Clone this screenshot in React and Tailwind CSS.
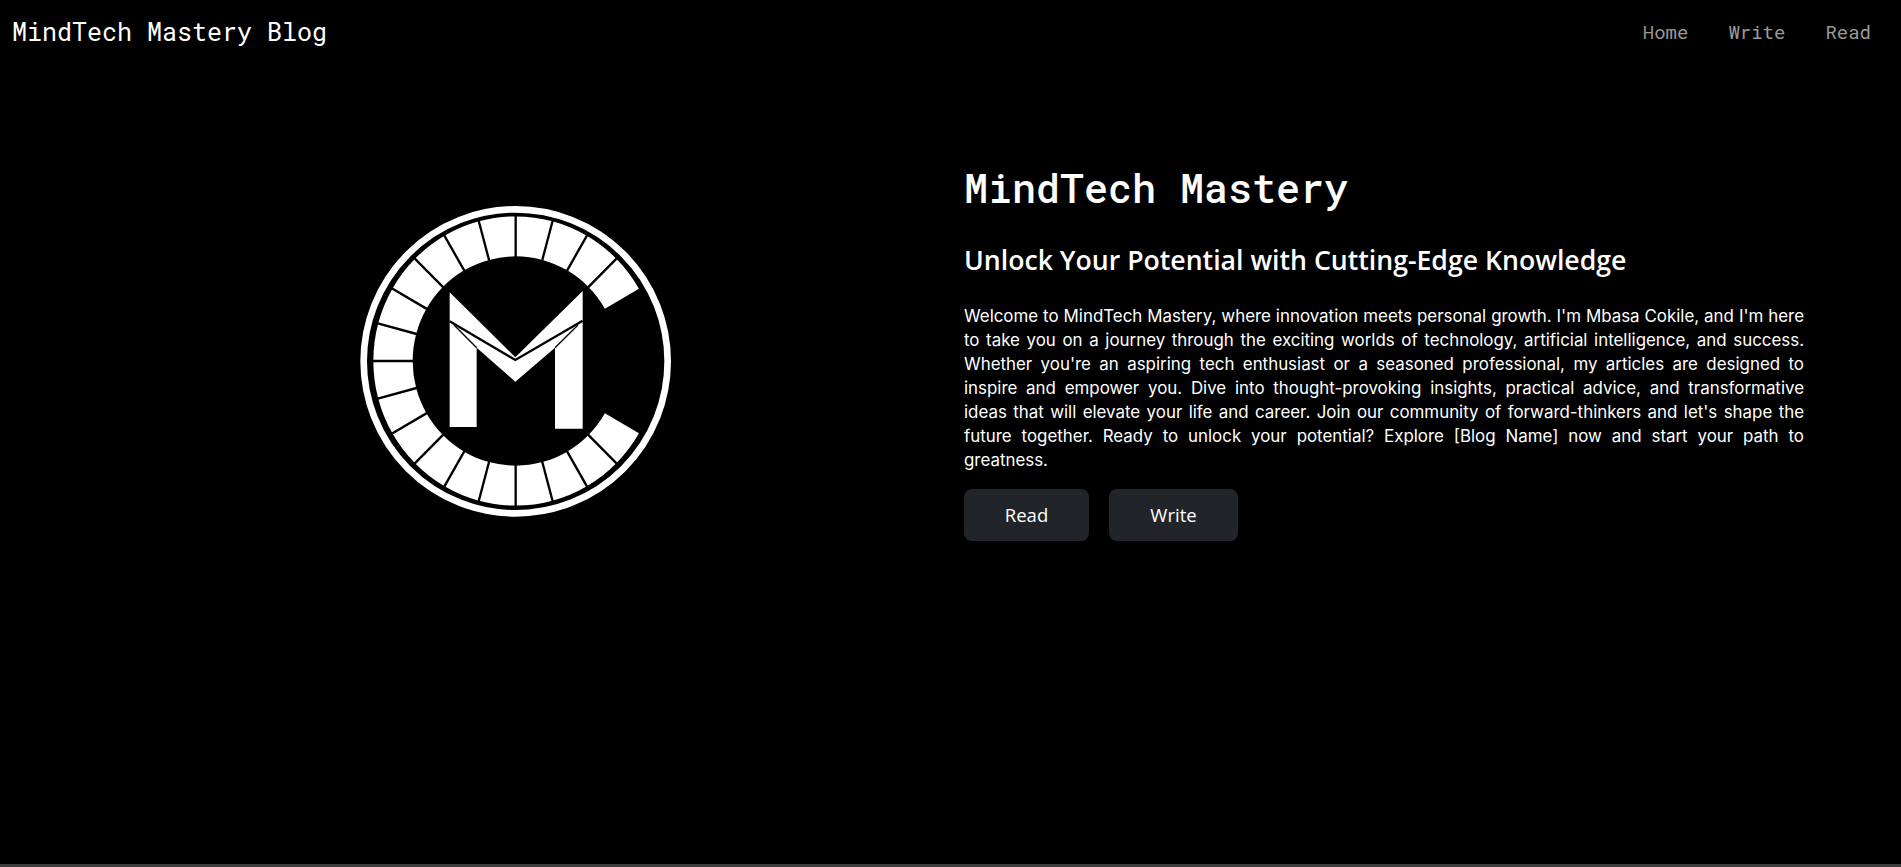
const cx = 527
const cy = 513
const rOuter = 427
const rInner = 309

// point on a circle, angle in degrees clockwise from the top
const pt = (r, deg) => {
  const a = (deg * Math.PI) / 180
  return [cx + r * Math.sin(a), cy - r * Math.cos(a)]
}

const sector = (from, to) => {
  const [x1, y1] = pt(rOuter, from)
  const [x2, y2] = pt(rOuter, to)
  const [x3, y3] = pt(rInner, to)
  const [x4, y4] = pt(rInner, from)
  return `M${x1} ${y1}A${rOuter} ${rOuter} 0 0 1 ${x2} ${y2}L${x3} ${y3}A${rInner} ${rInner} 0 0 0 ${x4} ${y4}Z`
}

const segments = Array.from({ length: 20 }, (_, i) => 120 + i * 15)

const Logo = () => (
  <svg viewBox="0 0 1050 1020" className="w-[350px] h-[340px]">
    <circle cx={cx} cy={cy + 1} r={456} fill="none" stroke="#fff" strokeWidth={20} />
    {/* the ring of blocks is a touch taller than wide in the picture */}
    <g transform={`translate(0 ${cy}) scale(1 1.016) translate(0 ${-cy})`}>
      {segments.map((deg) => (
        <path key={deg} d={sector(deg, deg + 15)} fill="#fff" />
      ))}
      {segments.slice(1).map((deg) => {
        const [x1, y1] = pt(rInner - 4, deg)
        const [x2, y2] = pt(rOuter + 4, deg)
        return <line key={deg} x1={x1} y1={y1} x2={x2} y2={y2} stroke="#000" strokeWidth={7} />
      })}
    </g>
    <line x1={812} y1={676} x2={908} y2={732} stroke="#000" strokeWidth={2} />
    {/* M */}
    <path d="M329 307L526 502L728 303V716H645V473L526 575L410 473V711H329Z" fill="#fff" />
    <path d="M329 394L526 510L728 392" fill="none" stroke="#000" strokeWidth={7} />
    <path d="M342 405L410 473M714 405L645 473" fill="none" stroke="#000" strokeWidth={4} />
  </svg>
)

const App = () => {
  const mono = "font-['Roboto_Mono','Liberation_Mono',monospace]"

  return (
    <div className="flex flex-col h-[867px] bg-black text-white overflow-hidden">
      <nav className="flex items-center justify-between h-[64px] pl-3 pr-[30px]">
        <span className={`${mono} text-[25px]`}>MindTech Mastery Blog</span>
        <div className={`${mono} flex gap-10 text-[19px] text-[#999]`}>
          <a>Home</a>
          <a>Write</a>
          <a>Read</a>
        </div>
      </nav>

      <main className="flex-1 grid grid-cols-2 gap-[27px] px-[97px]">
        <div className="flex justify-center pt-[126px] pr-1">
          <Logo />
        </div>
        <div className="pt-[100px]">
          <h1 className={`${mono} text-[40px] leading-[48px] font-medium`}>MindTech Mastery</h1>
          <h2 className="mt-[30px] font-['Open_Sans',sans-serif] text-[26.65px] leading-[36px] font-semibold">
            Unlock Your Potential with Cutting-Edge Knowledge
          </h2>
          <p className="mt-[26px] font-['Inter',sans-serif] text-[16.9px] leading-6 text-justify">
            Welcome to MindTech Mastery, where innovation meets personal growth. I'm Mbasa Cokile, and I'm here to take you on a journey through the exciting worlds of technology, artificial intelligence, and success. Whether you're an aspiring tech enthusiast or a seasoned professional, my articles are designed to inspire and empower you. Dive into thought-provoking insights, practical advice, and transformative ideas that will elevate your life and career. Join our community of forward-thinkers and let's shape the future together. Ready to unlock your potential? Explore [Blog Name] now and start your path to greatness.
          </p>
          <div className="flex gap-5 mt-[17px] font-['Open_Sans',sans-serif] text-[18.5px]">
            <button className="w-[125px] h-[52px] rounded-lg bg-[#212529]">Read</button>
            <button className="w-[129px] h-[52px] rounded-lg bg-[#212529]">Write</button>
          </div>
        </div>
      </main>

      <div className="h-[3px] bg-[#3c3c3c]" />
    </div>
  )
}

export default App
